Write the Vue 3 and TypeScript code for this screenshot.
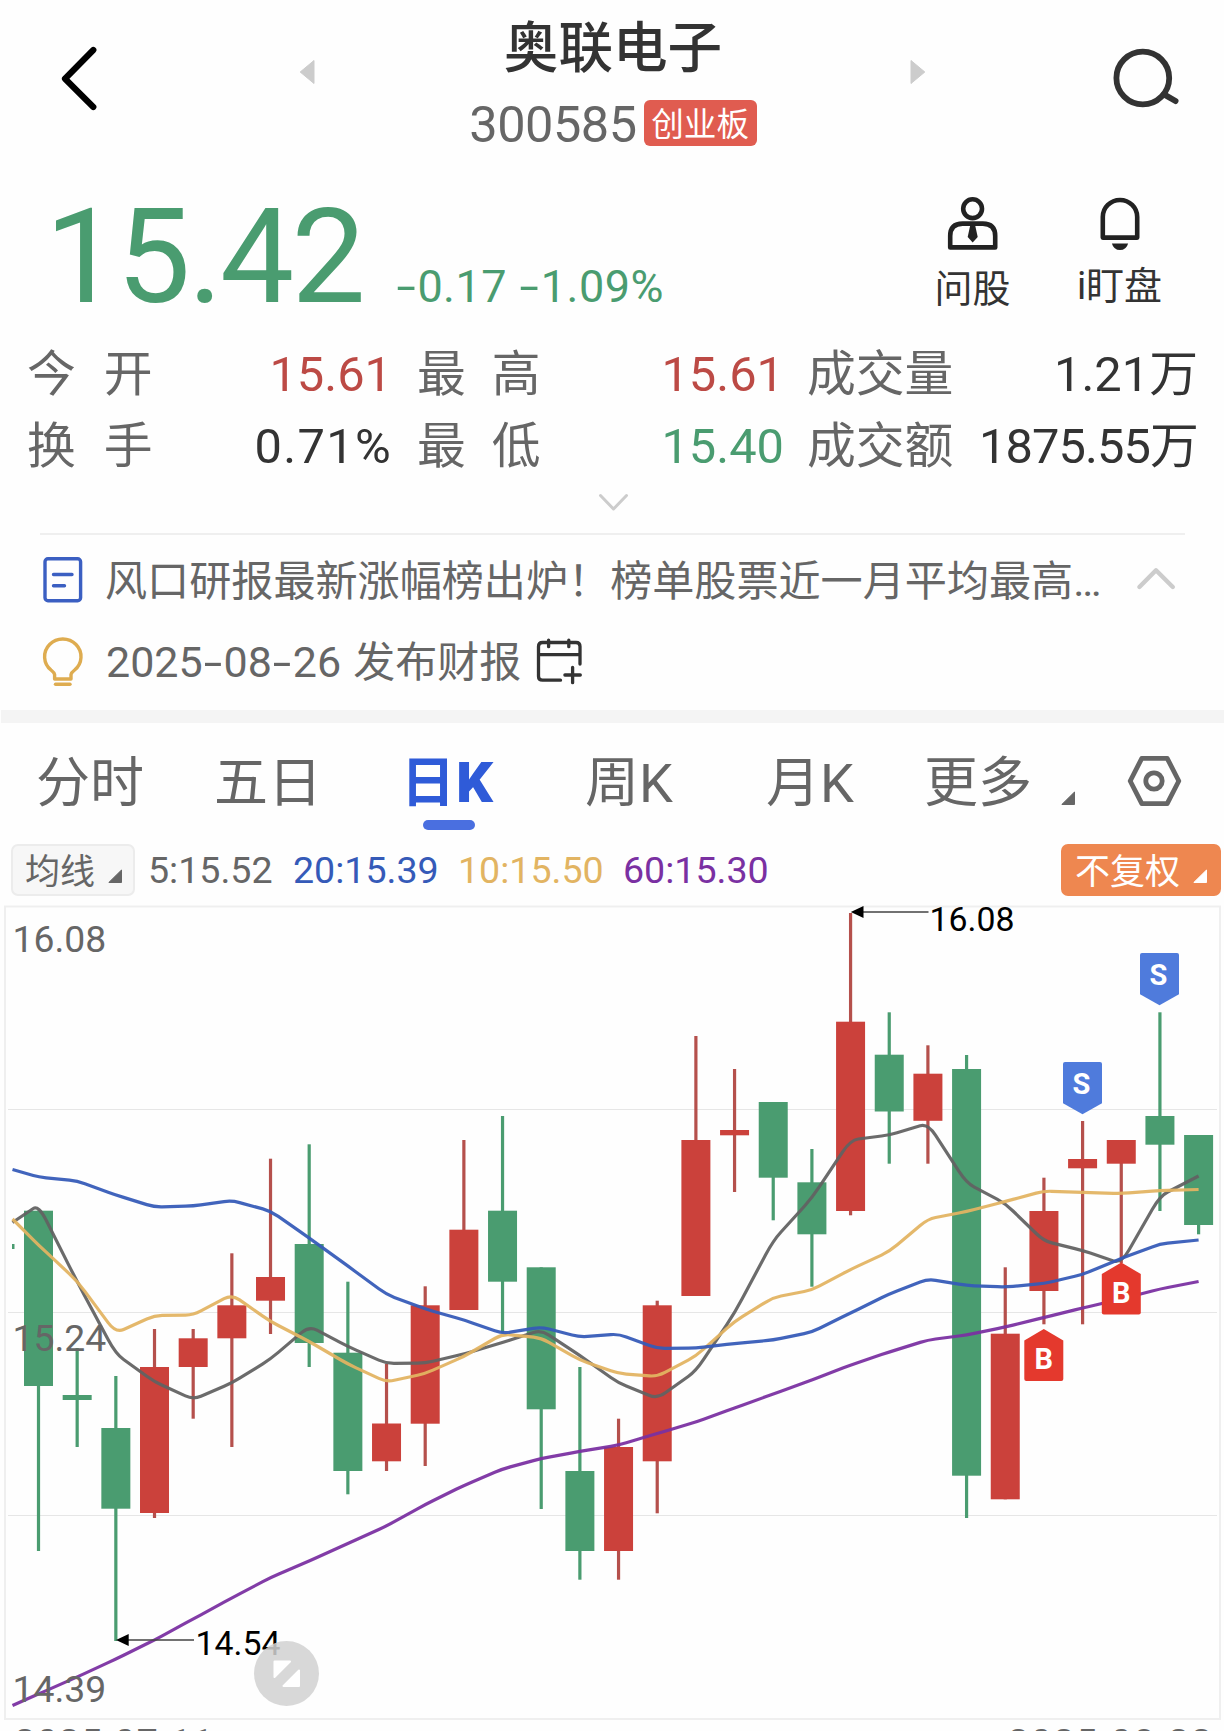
<script setup lang="ts">
type Dir = 'up' | 'down'
type Candle = [Dir, number, number, number, number]

// direction, high, body top, body bottom, low
const candles: Candle[] = [
  ['down', 1210.7, 1210.7, 1386, 1551],
  ['down', 1348, 1395, 1400, 1447],
  ['down', 1376, 1428, 1508.7, 1641],
  ['up', 1329, 1367, 1513, 1518],
  ['up', 1329, 1338.3, 1367, 1418.7],
  ['up', 1253.3, 1305.3, 1338.3, 1447],
  ['up', 1158.7, 1277, 1300.7, 1334],
  ['down', 1144.3, 1244, 1343, 1367],
  ['down', 1281.7, 1352.7, 1471, 1494.3],
  ['up', 1364, 1423.5, 1461.3, 1471],
  ['up', 1286.3, 1305.3, 1423.7, 1466],
  ['up', 1140, 1229.7, 1310, 1310],
  ['down', 1116, 1210.7, 1281.7, 1333],
  ['down', 1267.3, 1267.3, 1409.3, 1509],
  ['down', 1367, 1471, 1551, 1579.7],
  ['up', 1418.7, 1447, 1551, 1579.7],
  ['up', 1300.7, 1305.3, 1461.3, 1513.3],
  ['up', 1036, 1140, 1296, 1296],
  ['up', 1069, 1130, 1135.3, 1192],
  ['down', 1102, 1102, 1177.7, 1220.3],
  ['down', 1149, 1182.3, 1234.3, 1286.7],
  ['up', 913, 1021.7, 1211, 1215.3],
  ['down', 1012.3, 1054.7, 1111.5, 1163.7],
  ['up', 1045.3, 1073.7, 1120.8, 1163.7],
  ['down', 1055, 1069, 1475.7, 1518],
  ['up', 1267.3, 1333.7, 1499.3, 1499.3],
  ['up', 1177.7, 1211, 1291, 1324.3],
  ['up', 1121, 1159, 1168.3, 1324.3],
  ['up', 1140, 1140, 1163.7, 1263],
  ['down', 1012.3, 1116, 1144.7, 1211],
  ['down', 1135, 1135, 1225, 1234.3],
]

const step = 38.67
const cx = (i: number) => 38.5 + i * step

const averages = [
  {
    color: '#626262',
    start: 1222.5,
    ys: [1205, 1281.7, 1354, 1381.7, 1399.5, 1383, 1359, 1326, 1346.5, 1363.5, 1363, 1354, 1342.5, 1330, 1355.5, 1383, 1398.5, 1371, 1313, 1240.5, 1198, 1140, 1135, 1123.5, 1183, 1203.5, 1241, 1250.5, 1263.5, 1196, 1176],
  },
  {
    color: '#e2b462',
    start: 1219,
    ys: [1245, 1281, 1333, 1315.5, 1315, 1294.5, 1321.5, 1341.5, 1364, 1382, 1373.5, 1356.5, 1334, 1338, 1360, 1373.5, 1376.5, 1356, 1321.5, 1297.5, 1290, 1269.5, 1251.5, 1219, 1211.5, 1201.5, 1191, 1192.5, 1193.5, 1190.5, 1189.5],
  },
  {
    color: '#355ab8',
    start: 1169.5,
    ys: [1177, 1181, 1195, 1207, 1206, 1200.5, 1211, 1238, 1266, 1294.5, 1309, 1320, 1333.5, 1327, 1337, 1334, 1348.5, 1348, 1343.5, 1340, 1332, 1313, 1294, 1279, 1285.5, 1287, 1283.5, 1274.5, 1258.5, 1244, 1240],
  },
  {
    color: '#7a30a2',
    start: 1705.5,
    ys: [1694, 1677, 1659, 1640, 1619, 1598, 1577.5, 1561, 1543.5, 1526, 1504.5, 1485.5, 1469, 1458.5, 1451.5, 1445, 1433.5, 1422, 1408, 1394, 1380, 1365, 1352, 1340, 1335, 1327, 1317.5, 1308, 1299, 1289, 1281.5],
  },
]

// polyline with softened corners
function trace(start: number, ys: number[]): string {
  const pts: [number, number][] = [[12.5, start], ...ys.map((y, i): [number, number] => [cx(i), y])]
  const k = 0.2
  const mix = (a: [number, number], b: [number, number], t: number) =>
    `${(a[0] + (b[0] - a[0]) * t).toFixed(1)} ${(a[1] + (b[1] - a[1]) * t).toFixed(1)}`
  let d = `M${pts[0][0]} ${pts[0][1]}`
  for (let i = 1; i < pts.length - 1; i++) {
    d += ` L${mix(pts[i], pts[i - 1], k)} Q${pts[i][0].toFixed(1)} ${pts[i][1]} ${mix(pts[i], pts[i + 1], k)}`
  }
  const last = pts[pts.length - 1]
  return `${d} L${last[0].toFixed(1)} ${last[1]}`
}

const sells = [
  { x: 1140, y: 953 },
  { x: 1063, y: 1062 },
]
const buys = [
  { x: 1101.8, y: 1262.5 },
  { x: 1024.3, y: 1329 },
]
const grid = [1109.5, 1312.5, 1515.5]
</script>

<template>
  <main class="page">
    <header class="head">
      <svg class="back" width="40" height="70" viewBox="60 44 40 70">
        <path d="M93.300 50 65 78.700 93.300 107" fill="none" stroke="#000" stroke-width="6.200" stroke-linecap="round" stroke-linejoin="round" />
      </svg>
      <svg class="prev" width="16" height="26" viewBox="0 0 16 26">
        <path d="M15 1.500v23L1.200 13z" fill="#ccc" stroke="#ccc" stroke-linejoin="round" />
      </svg>
      <div class="name">
        <h1>奥联电子</h1>
        <div class="code"><span>300585</span><b>创业板</b></div>
      </div>
      <svg class="next" width="16" height="26" viewBox="0 0 16 26">
        <path d="M1 1.500v23L14.800 13z" fill="#ccc" stroke="#ccc" stroke-linejoin="round" />
      </svg>
      <svg class="search" width="70" height="66" viewBox="1110 44 70 66">
        <circle cx="1142.800" cy="78" r="26.400" fill="none" stroke="#333" stroke-width="5.800" />
        <path d="M1164 94.300 1175.500 101" stroke="#333" stroke-width="6" stroke-linecap="round" />
      </svg>
    </header>

    <section class="quote">
      <div class="last">
        <strong>15.42</strong>
        <span class="chg"><i class="hy">-</i>0.17 <i class="hy">-</i>1.09%</span>
      </div>
      <nav class="tools">
        <a>
          <svg width="54" height="56" viewBox="945 195 54 56">
            <circle cx="971.600" cy="208.700" r="9.400" fill="none" stroke="#222" stroke-width="4.600" />
            <path d="M949.200 247.400V236q0-12.400 12.400-12.400h20.200q12.400 0 12.400 12.400v11.400z" fill="none" stroke="#222" stroke-width="4.600" stroke-linejoin="round" />
            <path d="M969.300 225h4.800l2.600 12-5 5.600-5-5.600z" fill="#222" />
          </svg>
          <span>问股</span>
        </a>
        <a class="bell">
          <svg width="54" height="56" viewBox="1091.500 195 54 56">
            <path d="M1101.300 237.600V217a17.200 17 0 0 1 34.400 0v20.600z" fill="none" stroke="#222" stroke-width="4.600" stroke-linejoin="round" />
            <path d="M1110.400 243.400h16.200q-1.800 6.600-8.100 6.600t-8.100-6.600z" fill="#222" />
          </svg>
          <span>i盯盘</span>
        </a>
      </nav>
    </section>

    <section class="stats">
      <span class="lab">今<em />开</span><span class="val red">15.61</span>
      <span class="lab l2">最<em />高</span><span class="val red mid">15.61</span>
      <span class="lab l3">成交量</span><span class="val">1.21万</span>
      <span class="lab">换<em />手</span><span class="val pct">0.71%</span>
      <span class="lab l2">最<em />低</span><span class="val green mid">15.40</span>
      <span class="lab l3">成交额</span><span class="val amt">1875.55万</span>
    </section>
    <div class="expand">
      <svg width="32" height="20" viewBox="596 492 32 20">
        <path d="M599.500 495.500 612.500 509 625.500 495.500" fill="none" stroke="#ccc" stroke-width="3" stroke-linecap="round" stroke-linejoin="round" />
      </svg>
    </div>

    <section class="news">
      <div class="row">
        <svg class="ico" width="44" height="50" viewBox="41 555 44 50">
          <rect x="45" y="558.700" width="35.600" height="42" rx="3" fill="none" stroke="#3b5fc2" stroke-width="3.400" />
          <path d="M53.500 574.500h18.500M53.500 585.700h11" stroke="#3b5fc2" stroke-width="3.400" stroke-linecap="round" />
        </svg>
        <span class="headline">风口研报最新涨幅榜出炉！榜单股票近一月平均最高…</span>
        <svg class="fold" width="44" height="28" viewBox="1134 564 44 28">
          <path d="M1139.400 587 1156 570.300 1172.800 587" fill="none" stroke="#ccc" stroke-width="4.400" stroke-linecap="round" stroke-linejoin="round" />
        </svg>
      </div>
      <div class="row">
        <svg class="ico" width="44" height="50" viewBox="41 636 44 50">
          <path d="M54.600 678v-4.500q-.4-2-3.600-4.500a18.200 17.600 0 1 1 23.600 0q-3.200 2.500-3.600 4.500v4.500z" fill="none" stroke="#deac50" stroke-width="3.400" stroke-linejoin="round" />
          <path d="M55.500 683.200h14.500" stroke="#deac50" stroke-width="3.400" stroke-linecap="round" />
        </svg>
        <span class="report"><span class="date">2025<i class="hy">-</i>08<i class="hy">-</i>26</span>发布财报</span>
        <svg class="cal" width="48" height="48" viewBox="535 637 48 48">
          <path d="M560.500 680.200H542.500q-4 0-4-4V646.500q0-4 4-4h33.500q4 0 4 4V664M538.500 654.600H580M548.600 640.200v6.500M568.800 640.200v6.500M572.600 667.300v15.400M564.900 675h15.400" fill="none" stroke="#333" stroke-width="3.300" stroke-linecap="round" />
        </svg>
      </div>
    </section>

    <div class="band" />

    <nav class="tabs">
      <a>分时</a><a>五日</a><a class="on">日<b>K</b></a><a>周K</a><a>月K</a>
      <a>更多<svg class="tri" width="14" height="14" viewBox="0 0 14 14"><path d="M13.500 1v12.500H.8z" fill="#666" stroke="#666" stroke-linejoin="round" /></svg></a>
      <svg class="hex" width="58" height="54" viewBox="1126 754 58 54">
        <path d="M1142.800 758.300h25.400l11.600 22.700-11.600 22.700h-25.400L1131.200 781z" fill="none" stroke="#666" stroke-width="4.800" stroke-linejoin="round" />
        <circle cx="1155" cy="781" r="8.200" fill="none" stroke="#666" stroke-width="4.800" />
      </svg>
    </nav>

    <div class="legend">
      <button class="ma">均线<svg width="14" height="14" viewBox="0 0 14 14"><path d="M13.500 1v12.500H.8z" fill="#666" stroke="#666" stroke-linejoin="round" /></svg></button>
      <span class="m5">5:15.52</span>
      <span class="m20">20:15.39</span>
      <span class="m10">10:15.50</span>
      <span class="m60">60:15.30</span>
      <button class="adj">不复权<svg width="14" height="14" viewBox="0 0 14 14"><path d="M13.500 1v12.500H.8z" fill="#fff" stroke="#fff" stroke-linejoin="round" /></svg></button>
    </div>

    <svg class="chart" width="1224" height="831" viewBox="0 900 1224 831">
      <rect x="5" y="906.500" width="1215" height="812.500" fill="none" stroke="#efefef" stroke-width="2" />
      <path v-for="y in grid" :key="y" :d="`M8 ${y}H1217`" stroke="#e6e6e6" />

      <rect x="12" y="1244" width="2.500" height="5" fill="#4a9c70" />
      <g v-for="(c, i) in candles" :key="i" :class="c[0]">
        <rect class="wick" :x="cx(i) - 1.6" :y="c[1]" width="3.200" :height="c[4] - c[1]" />
        <rect class="body" :x="cx(i) - 14.5" :y="c[2]" width="29" :height="c[3] - c[2]" />
      </g>
      <path v-for="m in averages" :key="m.color" :d="trace(m.start, m.ys)" :stroke="m.color" fill="none" stroke-width="3.200" opacity=".94" />

      <g class="axis">
        <text x="12.500" y="952.200">16.08</text>
        <text x="12.500" y="1351.300">15.24</text>
        <text x="12.500" y="1702.300">14.39</text>
        <text x="14.500" y="1754.500" textLength="199">2025-07-11</text>
        <text x="1008" y="1754.500" textLength="204">2025-08-22</text>
      </g>

      <path d="M860 912H928.500M126 1640H194" stroke="#444" stroke-width="1.500" />
      <path d="M850.800 912l12.700-6v12zM116 1640l12.700-6v12z" />
      <g class="peak">
        <text x="929.500" y="930.500">16.08</text>
        <text x="195.500" y="1654.500">14.54</text>
      </g>

      <g v-for="s in sells" :key="s.x">
        <path :d="`M${s.x + 2} ${s.y}h35q2 0 2 2v39.300l-19.500 10.900-19.500-10.900v-39.300q0-2 2-2z`" fill="#4f7bdc" />
        <text class="mark" :x="s.x + 18.5" :y="s.y + 32.3">S</text>
      </g>
      <g v-for="b in buys" :key="b.x">
        <path :d="`M${b.x} ${b.y + 11.5}l19.500-11.500 19.500 11.500v38.500q0 2-2 2h-35q-2 0-2-2z`" fill="#e4392d" />
        <text class="mark" :x="b.x + 19.5" :y="b.y + 40.3">B</text>
      </g>

      <circle cx="286.500" cy="1673.500" r="32.500" fill="#d2d2d2" fill-opacity=".86" />
      <path d="M274.500 1661.500h15.500l-15.500 15.500zM299 1670.500v15.500h-15.500z" fill="#fff" stroke="#fff" stroke-width="2" stroke-linejoin="round" />
    </svg>
  </main>
</template>

<style>
body {
  margin: 0;
  background: #fefefe;
}
</style>

<style scoped>
.page {
  width: 1224px;
  height: 1731px;
  overflow: hidden;
  background: #fefefe;
  color: #333;
  font-family: Roboto, "Noto Sans CJK SC", sans-serif;
  line-height: 1;
  white-space: nowrap;
}
svg {
  display: block;
  flex: none;
}
i {
  font-style: normal;
}
.hy {
  display: inline-block;
  transform: scaleX(1.55);
  margin: 0 0.105em;
}
.head {
  display: grid;
  grid-template-columns: 60px 40px 200px 16px 594px 16px 184px 70px;
  height: 160px;
}
.back {
  grid-column: 2;
  margin-top: 44px;
}
.prev {
  grid-column: 4;
  margin: 59px 0 0 -1px;
}
.name {
  grid-column: 5;
  padding-top: 20px;
}
.next {
  grid-column: 6;
  margin-top: 59px;
}
.search {
  grid-column: 8;
  margin-top: 44px;
}
h1 {
  margin: 0;
  font-size: 54.6px;
  line-height: 56px;
  font-weight: 500;
  text-align: center;
}
.code {
  display: flex;
  justify-content: center;
  align-items: center;
  height: 46px;
  margin-top: 24px;
  font-size: 50.5px;
  color: #666;
}
.code span {
  padding-top: 4px;
  margin-right: 7px;
  letter-spacing: -0.5px;
}
.code b {
  box-sizing: border-box;
  width: 113px;
  height: 46px;
  border-radius: 6px;
  background: #e05c50;
  color: #fff;
  font-weight: 400;
  font-size: 32.6px;
  line-height: 50px;
  text-align: center;
}
.quote {
  display: flex;
  justify-content: space-between;
  height: 177px;
  color: #4a9c70;
}
.last {
  padding: 31px 0 0 45px;
  display: flex;
  align-items: baseline;
}
.last strong {
  font-size: 132px;
  font-weight: 400;
  letter-spacing: -2.7px;
}
.chg {
  margin-left: 32px;
  font-size: 45px;
  letter-spacing: 0.45px;
}
.tools {
  display: flex;
  margin-right: 31px;
  padding-top: 35px;
}
.tools a {
  width: 147px;
  display: flex;
  flex-direction: column;
  align-items: center;
  font-size: 38px;
  color: #333;
}
.tools span {
  margin-top: 19px;
}
.tools .bell span {
  margin-top: 16px;
}
.stats {
  display: grid;
  grid-template-columns: 124px 241px 124px 268px 122px 1fr;
  grid-template-rows: 72px 72px;
  align-items: center;
  padding: 0 26px 0 27px;
  font-size: 48.8px;
}
.lab {
  padding-top: 4px;
  color: #666;
}
.lab em {
  display: inline-block;
  width: 28px;
}
.l2 em {
  width: 26px;
}
.val {
  padding-top: 4px;
  text-align: right;
}
.stats .l2 {
  margin-left: 25px;
}
.stats .l3 {
  margin-left: 23px;
}
.pct {
  letter-spacing: 1.3px;
}
.amt {
  letter-spacing: -0.9px;
}
.red {
  color: #bc4a45;
}
.green {
  color: #4a9c70;
}
.expand {
  display: flex;
  justify-content: center;
  margin: 0 39px 0 40px;
  padding: 11px 0 21px;
  border-bottom: 2px solid #efefef;
}
.news {
  padding: 6px 46px 5px 41px;
  color: #666;
}
.row {
  display: flex;
  align-items: center;
  height: 82px;
}
.ico {
  margin: -4px 20px 0 0;
}
.headline {
  width: 1029px;
  padding-top: 1px;
  font-size: 42.1px;
}
.fold {
  margin-top: -8px;
}
.report {
  margin-top: -3px;
  font-size: 42px;
}
.date {
  margin: 0 12px 0 1px;
  font-size: 43px;
}
.cal {
  margin: -6px 0 0 14px;
}
.band {
  height: 13px;
  margin-left: 1px;
  background: #f4f4f4;
}
.tabs {
  display: grid;
  grid-template-columns: 178px 187px 184px 181px 158px 201px 58px;
  align-items: center;
  height: 118px;
  padding-left: 36px;
  font-size: 54px;
  color: #666;
}
.tabs a {
  position: relative;
  display: flex;
  align-items: flex-end;
  padding-top: 3px;
}
.tabs .on {
  color: #2f5bd8;
  font-weight: 700;
}
.tabs .on b {
  margin-left: 1px;
  transform: scale(1.07, 1.03);
  transform-origin: 0 80%;
}
.tabs .on::after {
  content: "";
  position: absolute;
  left: 22px;
  top: 66px;
  width: 52px;
  height: 10px;
  border-radius: 5px;
  background: #4a6fe0;
}
.tri {
  margin: 0 0 6px 29px;
}
.hex {
  margin-top: -3px;
}
.legend {
  display: flex;
  align-items: center;
  height: 59px;
  padding: 0 3px 0 11px;
  font-size: 37.6px;
}
.legend span {
  width: 165px;
}
.legend button {
  box-sizing: border-box;
  display: flex;
  align-items: center;
  height: 52px;
  margin-top: -1px;
  padding: 4px 0 0 12px;
  border: 2px solid #ececec;
  border-radius: 7px;
  background: #f7f7f7;
  color: #666;
  font: 35px/1 Roboto, "Noto Sans CJK SC", sans-serif;
}
.legend button svg {
  margin: 8px 0 0 13px;
}
.legend .ma {
  width: 124px;
}
.legend .adj {
  width: 160px;
  margin-left: auto;
  border-color: #ee8750;
  background: #ee8750;
  color: #fff;
}
.legend .m5 {
  width: 145px;
  margin-left: 13px;
  color: #666;
}
.m20 {
  color: #355ab8;
}
.m10 {
  color: #e2b462;
}
.m60 {
  color: #7a30a2;
}
.up {
  fill: #cb413b;
}
.up .wick {
  fill: #b5504c;
}
.down {
  fill: #4a9c70;
}
.axis {
  font-size: 37.3px;
  fill: #666;
}
.peak {
  font-size: 33.8px;
  fill: #000;
}
.mark {
  font-size: 29px;
  font-weight: 700;
  fill: #fff;
  text-anchor: middle;
}
</style>
